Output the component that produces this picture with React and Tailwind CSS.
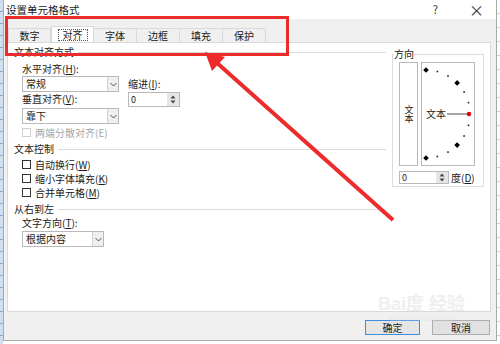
import React from 'react';

const FONT = { fontFamily: '"Noto Sans CJK SC", "Noto Sans", sans-serif' };

const Chevron = () => (
  <svg width="7" height="5" viewBox="0 0 7 5">
    <path d="M0.5 1 L3.5 4 L6.5 1" fill="none" stroke="#555" strokeWidth="1" />
  </svg>
);

const SpinArrows = () => (
  <svg width="6" height="9" viewBox="0 0 6 9">
    <path d="M3 0.5 L5.5 3.5 L0.5 3.5 Z" fill="#444" />
    <path d="M3 8.5 L5.5 5.5 L0.5 5.5 Z" fill="#444" />
  </svg>
);

const Combo = ({ value, width }) => (
  <div className={`flex h-[16px] border border-[#b9b9b9] bg-white ${width}`}>
    <div className="flex-1 pl-[3px] leading-[14px]">{value}</div>
    <div className="flex w-[11px] items-center justify-center border-l border-[#d0d0d0] bg-[#efefef]">
      <Chevron />
    </div>
  </div>
);

const Spin = ({ width, height }) => (
  <div className={`flex shrink-0 border border-[#b9b9b9] bg-white ${width} ${height}`}>
    <div className="flex flex-1 items-center pl-[2px] text-[9px]">0</div>
    <div className="flex w-[12px] items-center justify-center bg-[#e6e6e6]">
      <SpinArrows />
    </div>
  </div>
);

const Check = ({ label, disabled }) => (
  <div className={`flex h-[12px] items-center gap-[4px] ${disabled ? 'text-[#a6a6a6]' : ''}`}>
    <div className={`h-[9px] w-[9px] bg-white border ${disabled ? 'border-[#cfcfcf]' : 'border-[#333]'}`} />
    <span>{label}</span>
  </div>
);

const Section = ({ title }) => (
  <div className="flex h-[12px] items-center gap-[4px] leading-[12px]">
    <span>{title}</span>
    <div className="h-px flex-1 bg-[#dcdcdc]" />
  </div>
);

const Tab = ({ label, active }) => (
  <div
    className={
      active
        ? 'flex h-[16px] w-[43px] items-center justify-center border border-b-0 border-[#d9d9d9] bg-white'
        : 'flex h-[14px] w-[43px] items-center justify-center border border-b-0 border-l-0 border-[#d9d9d9] bg-[#f0f0f0] first:border-l'
    }
  >
    <span className={active ? 'border border-dotted border-[#555] px-[4px] leading-[10px]' : 'leading-[12px]'}>{label}</span>
  </div>
);

const Dial = () => {
  const dots = [];
  for (let a = -90; a <= 90; a += 15) {
    const r = (a * Math.PI) / 180;
    const x = 5 + 44 * Math.cos(r);
    const y = 52 + 44 * Math.sin(r);
    const big = a % 45 === 0 && a !== 0;
    if (a === 0) {
      dots.push(<circle key={a} cx={x - 1} cy={y} r="2.2" fill="#e00000" />);
    } else if (big) {
      dots.push(<rect key={a} x={x - 2} y={y - 2} width="4" height="4" transform={`rotate(45 ${x} ${y})`} fill="#000" />);
    } else {
      dots.push(<rect key={a} x={x - 0.8} y={y - 0.8} width="1.6" height="1.6" fill="#222" />);
    }
  }
  return (
    <div className="relative h-[104px] w-[54px] border border-[#b9b9b9] bg-white">
      <svg width="54" height="104" viewBox="0 0 54 104" className="absolute left-[-1px] top-[-1px]">
        <line x1="26" y1="52" x2="47" y2="52" stroke="#8a8a8a" strokeWidth="1.5" />
        {dots}
      </svg>
      <span className="absolute left-[4px] top-[45px] leading-[12px]">文本</span>
    </div>
  );
};

export default function App() {
  return (
    <div className="relative flex h-[344px] w-[500px] overflow-hidden bg-white text-[10px] text-[#1a1a1a]" style={FONT}>
      <div className="w-[3px] bg-[repeating-linear-gradient(#cfdff0_0px,#cfdff0_11px,#8fa8c8_11px,#8fa8c8_12px)]" />

      <div className="flex h-[341px] w-[494px] flex-col border-x border-b border-[#a9a9a9] bg-[#f0f0f0]">
        <div className="flex h-[19px] items-center bg-white pl-[2px]">
          <span className="text-[10.5px]">设置单元格格式</span>
          <span className="ml-auto mr-[31px] text-[11px] text-[#333]">?</span>
          <span className="mr-[12px] text-[15px] leading-none text-[#333]">×</span>
        </div>

        <div className="flex h-[23px] items-end pl-[4px]">
          <Tab label="数字" />
          <Tab label="对齐" active />
          <Tab label="字体" />
          <Tab label="边框" />
          <Tab label="填充" />
          <Tab label="保护" />
        </div>

        <div className="ml-[3px] flex h-[270px] w-[484px] gap-[6px] border border-[#d9d9d9] bg-white pl-[6px] pt-[3px]">
          <div className="flex w-[372px] flex-col">
            <Section title="文本对齐方式" />
            <div className="mt-[5px] flex gap-[9px] pl-[8px]">
              <div className="flex flex-col">
                <div className="h-[12px] leading-[12px]">水平对齐(<u>H</u>):</div>
                <div className="mt-[1px]"><Combo value="常规" width="w-[97px]" /></div>
                <div className="mt-[1px] h-[12px] leading-[12px]">垂直对齐(<u>V</u>):</div>
                <div className="mt-[3px]"><Combo value="靠下" width="w-[97px]" /></div>
                <div className="mt-[2px]"><Check label="两端分散对齐(E)" disabled /></div>
              </div>
              <div className="flex flex-col pt-[15px]">
                <div className="h-[12px] leading-[12px]">缩进(<u>I</u>):</div>
                <div className="mt-[2px]"><Spin width="w-[52px]" height="h-[15px]" /></div>
              </div>
            </div>
            <div className="mt-[5px]"><Section title="文本控制" /></div>
            <div className="mt-[3px] flex flex-col gap-[2px] pl-[8px]">
              <Check label={<>自动换行(<u>W</u>)</>} />
              <Check label={<>缩小字体填充(<u>K</u>)</>} />
              <Check label={<>合并单元格(<u>M</u>)</>} />
            </div>
            <div className="mt-[5px]"><Section title="从右到左" /></div>
            <div className="mt-[2px] flex flex-col pl-[8px]">
              <div className="h-[12px] leading-[12px]">文字方向(<u>T</u>):</div>
              <div className="mt-[2px]"><Combo value="根据内容" width="w-[82px]" /></div>
            </div>
          </div>

          <fieldset className="mt-[2px] h-[139px] w-[92px] border border-[#dcdcdc] pl-[6px] pr-[2px]">
            <legend className="ml-[-5px] leading-[12px]">方向</legend>
            <div className="mt-[2px] flex gap-[3px]">
              <div className="flex h-[104px] w-[19px] items-center justify-center border border-[#b9b9b9] bg-white text-[9px]">
                <span className="leading-[10px] [writing-mode:vertical-rl]">文本</span>
              </div>
              <Dial />
            </div>
            <div className="mt-[4px] flex items-center gap-[2px] whitespace-nowrap">
              <Spin width="w-[50px]" height="h-[13px]" />
              <span>度(<u>D</u>)</span>
            </div>
          </fieldset>
        </div>

        <div className="flex flex-1 items-start justify-end gap-[12px] pr-[6px] pt-[8px]">
          <div className="flex h-[15px] w-[55px] items-center justify-center border border-[#3c8ee0] bg-[#e5e5e5]">确定</div>
          <div className="flex h-[15px] w-[58px] items-center justify-center border border-[#adadad] bg-[#e1e1e1]">取消</div>
        </div>
      </div>

      <div className="flex-1 bg-[repeating-linear-gradient(#ffffff_0px,#ffffff_13px,#d4d4d4_13px,#d4d4d4_14px)]" />

      <div className="pointer-events-none absolute left-[378px] top-[294px] flex flex-col items-center text-[#e0e0e0] opacity-50">
        <span className="text-[18px] font-bold leading-[20px]" style={{ fontFamily: '"Liberation Sans", "Noto Sans CJK SC", sans-serif' }}>Bai度 经验</span>
        <span className="text-[8px] leading-[9px]" style={{ fontFamily: '"Liberation Sans", sans-serif' }}>jingyan.baidu.com</span>
      </div>

      <div className="pointer-events-none absolute left-[5px] top-[16px] h-[40px] w-[284px] border-[3px] border-[#ee2b2b]" />

      <svg className="pointer-events-none absolute left-0 top-0" width="500" height="344" viewBox="0 0 500 344">
        <line x1="216" y1="62" x2="393" y2="220" stroke="#ee2b2b" strokeWidth="4" />
        <polygon points="205,52 212,71 225,57" fill="#ee2b2b" />
      </svg>
    </div>
  );
}
